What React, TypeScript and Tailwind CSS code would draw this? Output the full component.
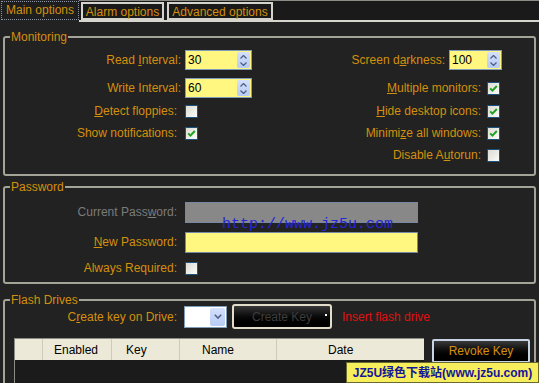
import React from "react";

function Check({ checked = false }: { checked?: boolean }) {
  return (
    <div className="flex h-[13px] w-[13px] shrink-0 items-center justify-center border border-[#1c5180] bg-gradient-to-br from-[#dcdcd4] to-[#fbfbf9]">
      {checked && (
        <svg width="11" height="11" viewBox="0 0 11 11">
          <path d="M2.2 5.4 L4.4 7.6 L8.8 3" fill="none" stroke="#21a121" strokeWidth="2" />
        </svg>
      )}
    </div>
  );
}

function Spin({ value, w }: { value: string; w: string }) {
  return (
    <div className={`flex h-[20px] shrink-0 items-stretch border border-[#7f9db9] bg-[#fff77f] ${w}`}>
      <div className="flex flex-1 items-center pl-[2px] text-[12px] text-black">{value}</div>
      <div className="my-[1px] mr-[1px] flex w-[13px] flex-col items-center justify-center gap-[3px] rounded-[2px] bg-gradient-to-b from-[#d4e0fb] to-[#b8cbf5]">
        <svg width="7" height="4" viewBox="0 0 7 4">
          <path d="M0.5 3.5 L3.5 0.5 L6.5 3.5" fill="none" stroke="#4d6185" strokeWidth="1.3" />
        </svg>
        <svg width="7" height="4" viewBox="0 0 7 4">
          <path d="M0.5 0.5 L3.5 3.5 L6.5 0.5" fill="none" stroke="#4d6185" strokeWidth="1.3" />
        </svg>
      </div>
    </div>
  );
}

export default function App() {
  return (
    <div className="relative h-[383px] w-[539px] overflow-hidden bg-[#222222] font-['Liberation_Sans',Arial,sans-serif] text-[12px] leading-[14px] text-[#d4900c]">
      {/* Tab strip */}
      <div className="flex h-[22px]">
        <div className="ml-[1px] mt-[1px] flex h-[19px] w-[78px] items-center justify-center border border-dotted border-[#8e94a4] bg-[#1e1e1e] pb-[2px]">
          Main options
        </div>
        <div className="flex flex-1 items-end gap-[3px] border-b-2 border-t border-b-[#d6d6ce] border-t-[#8c8c86] bg-[#1a1a1a] pl-[2px]">
          <div className="flex h-[18px] w-[83px] items-center justify-center border-2 border-[#d4d4cc] bg-[#1a1a1a] pt-[2px]">
            Alarm options
          </div>
          <div className="flex h-[18px] w-[106px] items-center justify-center border-2 border-[#d4d4cc] bg-[#1a1a1a] pt-[2px]">
            Advanced options
          </div>
        </div>
      </div>

      {/* Monitoring */}
      <fieldset className="mx-[3px] mt-[8px] rounded-[3px] border-2 border-[#a3a398] p-0 pb-[8px]">
        <legend className="ml-[5px] px-[1px] leading-[14px]">Monitoring</legend>
        <div className="mt-[6px] flex h-[20px] items-center">
          <div className="flex w-[180px] justify-end pr-[4px]">
            <span>
              Read <span className="underline">I</span>nterval:
            </span>
          </div>
          <Spin value="30" w="w-[67px]" />
          <div className="ml-auto flex items-center pr-[32px]">
            <span className="mr-[4px]">
              Screen d<span className="underline">a</span>rkness:
            </span>
            <Spin value="100" w="w-[53px]" />
          </div>
        </div>
        <div className="mt-[8px] flex h-[20px] items-center">
          <div className="flex w-[180px] justify-end pr-[4px]">Write Interval:</div>
          <Spin value="60" w="w-[67px]" />
          <div className="ml-auto flex items-center pr-[34px]">
            <span className="mr-[6px]">
              <span className="underline">M</span>ultiple monitors:
            </span>
            <Check checked />
          </div>
        </div>
        <div className="mt-[2px] flex h-[22px] items-center">
          <div className="flex w-[180px] justify-end pr-[8px]">
            <span>
              <span className="underline">D</span>etect floppies:
            </span>
          </div>
          <Check />
          <div className="ml-auto flex items-center pr-[34px]">
            <span className="mr-[6px]">
              <span className="underline">H</span>ide desktop icons:
            </span>
            <Check checked />
          </div>
        </div>
        <div className="flex h-[22px] items-center">
          <div className="flex w-[180px] justify-end pr-[8px]">Show notifications:</div>
          <Check checked />
          <div className="ml-auto flex items-center pr-[34px]">
            <span className="mr-[6px]">
              Minimi<span className="underline">z</span>e all windows:
            </span>
            <Check checked />
          </div>
        </div>
        <div className="flex h-[22px] items-center">
          <div className="ml-auto flex items-center pr-[34px]">
            <span className="mr-[6px]">
              Disable A<span className="underline">u</span>torun:
            </span>
            <Check />
          </div>
        </div>
      </fieldset>

      {/* Password */}
      <fieldset className="mx-[3px] mt-[4px] rounded-[3px] border-2 border-[#a3a398] p-0 pb-[4px]">
        <legend className="ml-[5px] px-[1px] leading-[14px]">Password</legend>
        <div className="mt-[8px] flex h-[20px] items-center">
          <div className="flex w-[180px] justify-end pr-[8px] text-[#7c7c7c]">
            <span>
              Current Pass<span className="underline">w</span>ord:
            </span>
          </div>
          <div className="h-[21px] w-[233px] border border-[#7688a4] bg-[#888888]" />
        </div>
        <div className="mt-[10px] flex h-[20px] items-center">
          <div className="flex w-[180px] justify-end pr-[8px]">
            <span>
              <span className="underline">N</span>ew Password:
            </span>
          </div>
          <div className="h-[21px] w-[233px] border border-[#7688a4] bg-[#fff77f]" />
        </div>
        <div className="mt-[6px] flex h-[20px] items-center">
          <div className="flex w-[180px] justify-end pr-[8px]">Always Required:</div>
          <Check />
        </div>
      </fieldset>

      {/* Flash Drives */}
      <fieldset className="mx-[3px] mt-[9px] rounded-[3px] border-2 border-[#a3a398] p-0 pb-[20px]">
        <legend className="ml-[5px] px-[1px] leading-[14px]">Flash Drives</legend>
        <div className="-mt-[3px] flex h-[25px] items-center">
          <div className="flex w-[179px] justify-end pr-[7px]">
            <span>
              C<span className="underline">r</span>eate key on Drive:
            </span>
          </div>
          <div className="flex h-[22px] w-[43px] items-stretch border border-[#7f9db9] bg-white">
            <div className="flex-1" />
            <div className="my-[1px] mr-[1px] flex w-[15px] items-center justify-center rounded-[2px] bg-gradient-to-b from-[#d4e0fb] to-[#b8cbf5]">
              <svg width="8" height="5" viewBox="0 0 8 5">
                <path d="M0.8 0.8 L4 4 L7.2 0.8" fill="none" stroke="#4d6185" strokeWidth="1.6" />
              </svg>
            </div>
          </div>
          <div className="relative ml-[5px] flex h-[25px] w-[100px] items-center justify-center rounded-[3px] border-2 border-[#e2ddc8] bg-gradient-to-b from-[#383838] via-[#0a0a0a] to-[#000000] text-[#3c3c3c]">
            Create Key
            <div className="absolute right-[3px] top-[8px] h-[2px] w-[2px] bg-white" />
          </div>
          <span className="ml-[10px] text-[#e01010]">Insert flash drive</span>
        </div>
        <div className="mt-[9px] flex items-start">
          <div className="ml-[9px] h-[80px] w-[410px] border-l border-t border-[#8c8c86] bg-[#1b1b1b]">
            <div className="flex h-[21px] items-center bg-[#ece9d8] text-black">
              <div className="h-full w-[28px] border-r border-[#cfcbb8]" />
              <div className="flex h-full w-[69px] items-center border-r border-[#cfcbb8] pl-[11px]">Enabled</div>
              <div className="flex h-full w-[68px] items-center border-r border-[#cfcbb8] pl-[14px]">Key</div>
              <div className="flex h-full w-[97px] items-center border-r border-[#cfcbb8] pl-[22px]">Name</div>
              <div className="flex h-full flex-1 items-center pl-[51px]">Date</div>
            </div>
          </div>
          <div className="ml-[8px] mt-[1px] flex h-[24px] w-[98px] items-center justify-center rounded-[2px] border-2 border-[#c8d4e4] bg-gradient-to-b from-[#3a3a3a] via-[#0a0a0a] to-[#000000]">
            Revoke Key
          </div>
        </div>
      </fieldset>

      {/* watermarks */}
      <div className="absolute left-[222px] top-[216px] font-['Liberation_Mono',monospace] text-[15px] leading-[17px] text-[#2626d6]">
        http://www.jz5u.com
      </div>
      <div className="absolute left-[346px] top-[362px] flex h-[21px] w-[193px] items-center justify-center border border-[#6a6a30] bg-[#f6ee5c] font-['Liberation_Sans','Noto_Sans_CJK_SC',sans-serif] text-[12px] font-bold text-[#15159a]">
        JZ5U绿色下载站(www.jz5u.com)
      </div>
    </div>
  );
}
